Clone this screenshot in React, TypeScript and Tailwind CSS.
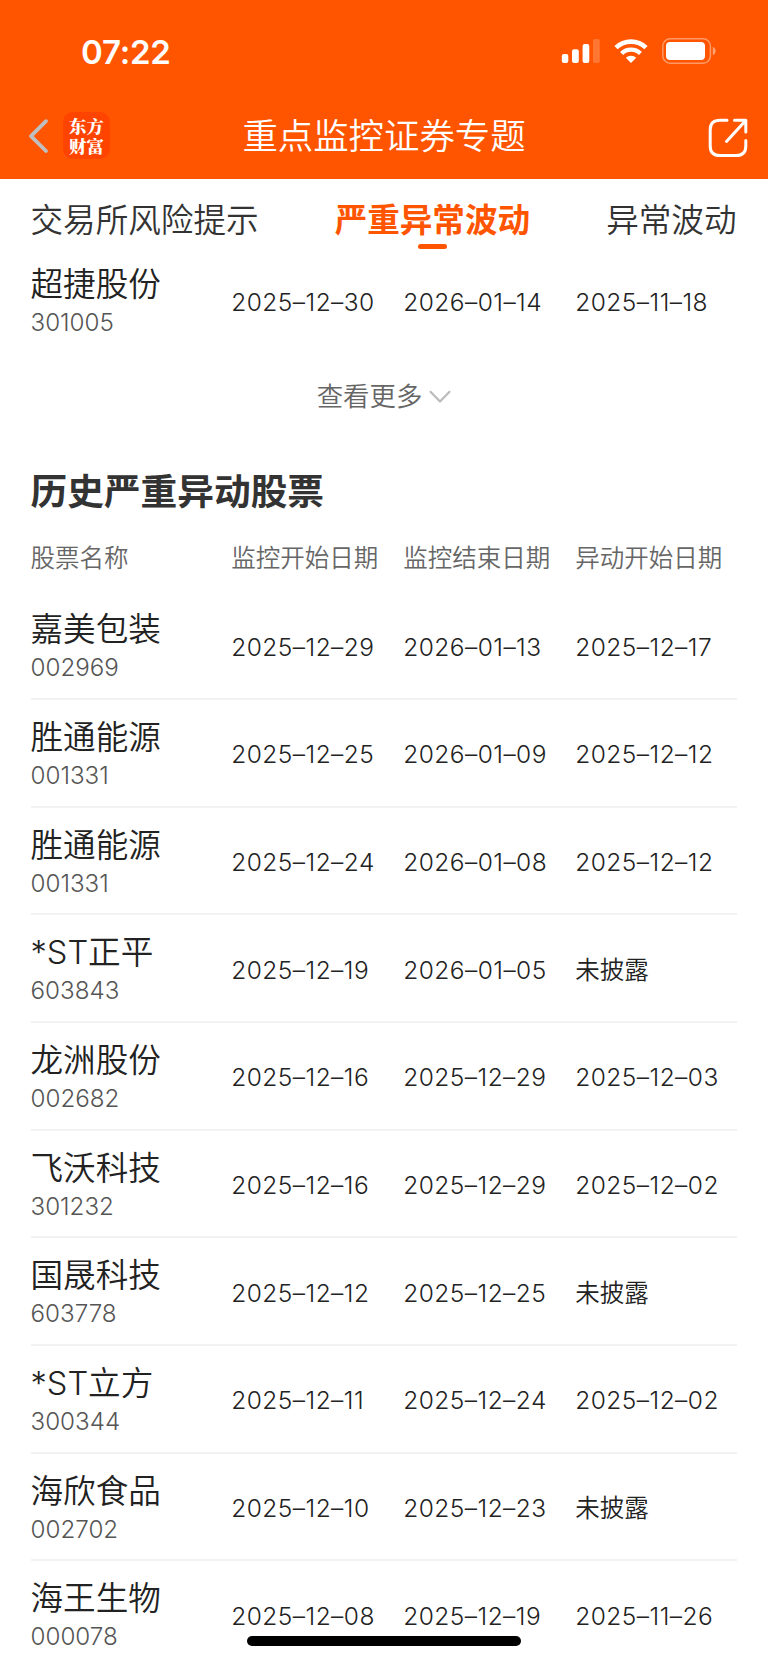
type Row = [string, string, string, string, string];

const rows: Row[] = [
  ['嘉美包装', '002969', '2025–12–29', '2026–01–13', '2025–12–17'],
  ['胜通能源', '001331', '2025–12–25', '2026–01–09', '2025–12–12'],
  ['胜通能源', '001331', '2025–12–24', '2026–01–08', '2025–12–12'],
  ['*ST正平', '603843', '2025–12–19', '2026–01–05', '未披露'],
  ['龙洲股份', '002682', '2025–12–16', '2025–12–29', '2025–12–03'],
  ['飞沃科技', '301232', '2025–12–16', '2025–12–29', '2025–12–02'],
  ['国晟科技', '603778', '2025–12–12', '2025–12–25', '未披露'],
  ['*ST立方', '300344', '2025–12–11', '2025–12–24', '2025–12–02'],
  ['海欣食品', '002702', '2025–12–10', '2025–12–23', '未披露'],
  ['海王生物', '000078', '2025–12–08', '2025–12–19', '2025–11–26'],
];

function StatusBar() {
  return (
    <div className="flex h-[102px] items-center pl-[81px] pr-[52px] text-white">
      <span className="flex-1 pt-px text-[33px] leading-[40px] font-semibold tracking-[-0.2px]">07:22</span>
      <svg className="mr-[14px] h-6 w-[39px]" viewBox="0 0 39 24" fill="currentColor">
        <rect x="0.8" y="15" width="6.5" height="9" rx="2" />
        <rect x="11" y="10.3" width="6.8" height="13.7" rx="2" />
        <rect x="21.6" y="5" width="6.7" height="19" rx="2" />
        <rect x="32" y="0" width="6.8" height="24" rx="2" opacity="0.2" />
      </svg>
      <svg className="mr-[14px] h-6 w-[34px]" viewBox="0 0 34 24" fill="none" stroke="currentColor">
        <path d="M2 8.7 A21.5 21.5 0 0 1 32 8.7" strokeWidth="4.6" />
        <path d="M7.6 14.5 A13.4 13.4 0 0 1 26.4 14.5" strokeWidth="4.4" />
        <path d="M17 24 L11.8 18.7 A7.6 7.6 0 0 1 22.2 18.7 Z" fill="currentColor" stroke="none" />
      </svg>
      <svg className="h-[26px] w-[54px]" viewBox="0 0 54 26" fill="none">
        <rect x="0.8" y="0.8" width="47.6" height="24.4" rx="7.2" stroke="white" strokeOpacity="0.4" strokeWidth="1.5" />
        <rect x="4" y="4" width="39" height="18" rx="4" fill="white" />
        <path d="M50.8 8.8 C54.6 10.2 54.6 15.8 50.8 17.2 Z" fill="white" fillOpacity="0.45" />
      </svg>
    </div>
  );
}

function TitleBar() {
  return (
    <div className="grid h-[77px] grid-cols-[1fr_auto_1fr] items-start px-[19px]">
      <div className="flex items-center pt-[10px] pl-[9px]">
        <svg className="h-[36px] w-[22px]" viewBox="0 0 22 36" fill="none" stroke="#bfbfbf" strokeWidth="3.8" strokeLinecap="round" strokeLinejoin="round">
          <path d="M18 3.2 L3 18.2 L18 33" />
        </svg>
        <div className="ml-[13px] h-[47px] w-[47px] rounded-[10px] bg-[#ff4400] px-[6px] pt-[3.5px] font-['Noto_Serif_CJK_SC','Noto_Sans_CJK_SC',sans-serif] text-[17.4px] leading-[20px] font-black break-all text-white">
          东方财富
        </div>
      </div>
      <h1 className="pt-[8px] text-[35.4px] leading-[53px] font-[350] text-white">重点监控证券专题</h1>
      <svg className="mt-[15px] h-[42px] w-[42px] justify-self-end" viewBox="0 0 42 42" fill="none" stroke="white" strokeWidth="3" strokeLinecap="round" strokeLinejoin="round">
        <path d="M20 3.2 H13 Q3.2 3.2 3.2 13 V29 Q3.2 38.6 13 38.6 H29 Q38.8 38.6 38.8 29 V23.5" />
        <path d="M27.5 3.2 H38.8 V15 M38 4.2 L19.5 24.5" />
      </svg>
    </div>
  );
}

function Tabs() {
  return (
    <nav className="flex h-[68px] justify-between pr-[31.5px] pl-[30.5px] pt-[17px] text-[32.6px] leading-[48px] text-[#333]">
      <span className="font-[350]">交易所风险提示</span>
      <span className="flex flex-col items-center font-bold text-[#ff5500]">
        严重异常波动
        <i className="ml-px h-[5px] w-[29px] shrink-0 rounded-full bg-[#ff5500]" />
      </span>
      <span className="font-[350]">异常波动</span>
    </nav>
  );
}

function StockRow({ row, border = true }: { row: Row; border?: boolean }) {
  const [name, code, start, end, move] = row;
  return (
    <div className={`mx-[31px] grid h-[107.67px] shrink-0 grid-cols-[200.3px_172px_172px_1fr] text-[24.5px] font-[350] text-[#222] ${border ? 'border-b-2 border-[#f2f2f2]' : ''}`}>
      <div className="-ml-[0.5px] whitespace-nowrap pt-[13px]">
        <div className="text-[32.6px] leading-[48px]">{name}</div>
        <div className="text-[24.2px] leading-[30px] font-light text-[#555]">{code}</div>
      </div>
      <div className="whitespace-nowrap pt-[36.5px] leading-[36px] tracking-[0.45px]">{start}</div>
      <div className="whitespace-nowrap pt-[36.5px] leading-[36px] tracking-[0.45px]">{end}</div>
      <div className={`whitespace-nowrap pt-[36.5px] leading-[36px] ${move.startsWith('2') ? 'tracking-[0.45px]' : ''}`}>{move}</div>
    </div>
  );
}

export default function App() {
  return (
    <div className="relative flex h-[1663px] w-[768px] flex-col overflow-hidden bg-white font-['Inter','Noto_Sans_CJK_SC',sans-serif]">
      <header className="h-[179px] shrink-0 bg-[#ff5500]">
        <StatusBar />
        <TitleBar />
      </header>
      <Tabs />
      <StockRow row={['超捷股份', '301005', '2025–12–30', '2026–01–14', '2025–11–18']} border={false} />
      <div className="flex h-[84px] shrink-0 items-center justify-center text-[26.4px] text-[#666]">
        <span className="font-[350]">查看更多</span>
        <svg className="ml-[7px] h-[14px] w-[22px]" viewBox="0 0 22 14" fill="none" stroke="#bbb" strokeWidth="2.2" strokeLinecap="round" strokeLinejoin="round">
          <path d="M1.5 1.8 L11 11.5 L20.5 1.8" />
        </svg>
      </div>
      <h2 className="h-[93px] shrink-0 px-[30.5px] pt-[26px] text-[36.7px] leading-[54px] font-bold text-[#333]">历史严重异动股票</h2>
      <div className="mx-[30.5px] grid h-[60.6px] shrink-0 grid-cols-[200.8px_172px_172px_1fr] whitespace-nowrap pt-[8px] text-[24.5px] leading-[36px] font-[350] text-[#666]">
        <span>股票名称</span>
        <span>监控开始日期</span>
        <span>监控结束日期</span>
        <span>异动开始日期</span>
      </div>
      {rows.map((row, i) => (
        <StockRow key={i} row={row} />
      ))}
      <div className="absolute bottom-[17px] left-[247px] h-[10px] w-[274px] rounded-full bg-black" />
    </div>
  );
}
